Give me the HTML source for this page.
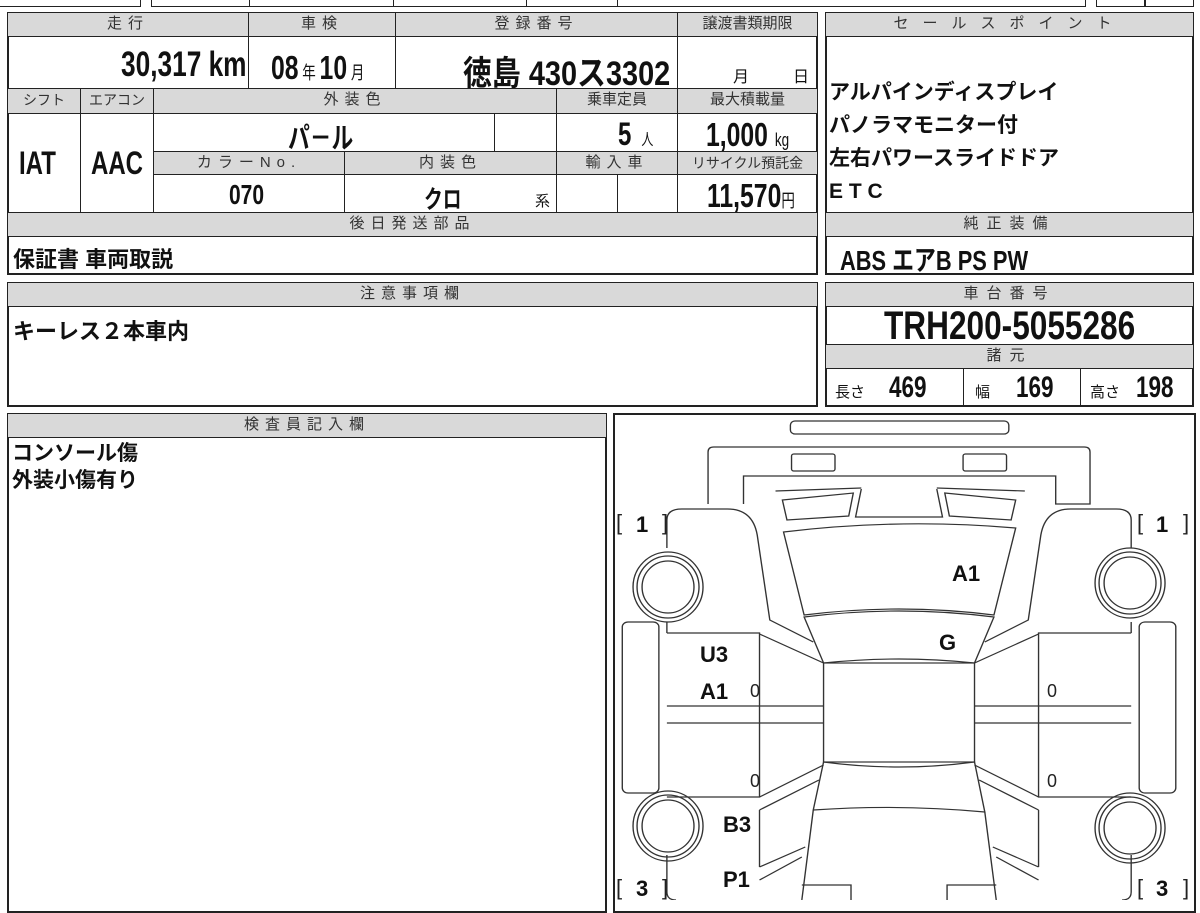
<!DOCTYPE html>
<html><head><meta charset="utf-8"><style>
body{margin:0;width:1200px;height:900px;overflow:hidden;background:#fff;position:relative;font-family:"Liberation Sans","Noto Sans CJK JP",sans-serif}
.b{position:absolute;border:1px solid #222;box-sizing:border-box}
.h{position:absolute;background:#d9d9d9;border:1px solid #222;box-sizing:border-box;font-size:15px;color:#333;text-align:center;letter-spacing:6px;line-height:22px;white-space:nowrap;overflow:hidden}
.v{position:absolute;box-sizing:border-box;font-weight:bold;color:#111;white-space:nowrap;transform:scaleX(0.75);transform-origin:0 0}
.v span{font-weight:normal}
.t{position:absolute;font-weight:bold;color:#111;white-space:nowrap}
.o{position:absolute;border:2px solid #222;box-sizing:border-box}
</style></head><body>
<div class="b" style="left:-2px;top:-10px;width:143px;height:17px"></div>
<div class="b" style="left:151px;top:-10px;width:935px;height:17px"></div>
<div class="b" style="left:249px;top:-10px;width:145px;height:17px"></div>
<div class="b" style="left:526px;top:-10px;width:92px;height:17px"></div>
<div class="b" style="left:1096px;top:-10px;width:98px;height:17px"></div>
<div class="b" style="left:1144px;top:-10px;width:1px;height:17px"></div>

<div class="o" style="left:7px;top:12px;width:811px;height:263px"></div>
<div class="h" style="left:7px;top:12px;width:242px;height:25px">走行</div>
<div class="h" style="left:248px;top:12px;width:148px;height:25px">車検</div>
<div class="h" style="left:395px;top:12px;width:283px;height:25px">登録番号</div>
<div class="h" style="left:677px;top:12px;width:141px;height:25px;letter-spacing:0">譲渡書類期限</div>
<div class="b" style="left:7px;top:36px;width:242px;height:53px"></div>
<div class="b" style="left:248px;top:36px;width:148px;height:53px"></div>
<div class="b" style="left:395px;top:36px;width:283px;height:53px"></div>
<div class="b" style="left:677px;top:36px;width:141px;height:53px"></div>
<div class="v" style="left:121px;top:45px;font-size:35px">30,317 km</div>
<div class="v" style="left:271px;top:49px;font-size:33px">08<span style="font-size:18px"> 年 </span>10<span style="font-size:18px"> 月</span></div>
<div class="v" style="left:463px;top:46px;font-size:34px;transform:scaleX(0.85)">徳島 430ス3302</div>
<div class="t" style="left:733px;top:63px;font-size:16px;font-weight:normal">月</div>
<div class="t" style="left:793px;top:63px;font-size:16px;font-weight:normal">日</div>

<div class="h" style="left:7px;top:88px;width:74px;height:26px;letter-spacing:0;font-size:14px">シフト</div>
<div class="h" style="left:80px;top:88px;width:74px;height:26px;letter-spacing:0;font-size:14px">エアコン</div>
<div class="h" style="left:153px;top:88px;width:404px;height:26px">外装色</div>
<div class="h" style="left:556px;top:88px;width:122px;height:26px;letter-spacing:0">乗車定員</div>
<div class="h" style="left:677px;top:88px;width:141px;height:26px;letter-spacing:0">最大積載量</div>
<div class="b" style="left:7px;top:113px;width:74px;height:100px"></div>
<div class="b" style="left:80px;top:113px;width:74px;height:100px"></div>
<div class="v" style="left:19px;top:145px;font-size:32px">IAT</div>
<div class="v" style="left:91px;top:145px;font-size:32px">AAC</div>
<div class="b" style="left:153px;top:113px;width:342px;height:39px"></div>
<div class="b" style="left:494px;top:113px;width:63px;height:39px"></div>
<div class="b" style="left:556px;top:113px;width:122px;height:39px"></div>
<div class="b" style="left:677px;top:113px;width:141px;height:39px"></div>
<div class="v" style="left:288px;top:115px;font-size:29px">パ－ル</div>
<div class="v" style="left:618px;top:116px;font-size:32px">5 <span style="font-size:16px">&nbsp;人</span></div>
<div class="v" style="left:706px;top:116px;font-size:33px">1,000 <span style="font-size:18px">kg</span></div>
<div class="h" style="left:153px;top:151px;width:192px;height:24px">カラーNo.</div>
<div class="h" style="left:344px;top:151px;width:213px;height:24px">内装色</div>
<div class="h" style="left:556px;top:151px;width:122px;height:24px">輸入車</div>
<div class="h" style="left:677px;top:151px;width:141px;height:24px;letter-spacing:0;font-size:14px">リサイクル預託金</div>
<div class="b" style="left:153px;top:174px;width:192px;height:39px"></div>
<div class="b" style="left:344px;top:174px;width:213px;height:39px"></div>
<div class="b" style="left:556px;top:174px;width:62px;height:39px"></div>
<div class="b" style="left:617px;top:174px;width:61px;height:39px"></div>
<div class="b" style="left:677px;top:174px;width:141px;height:39px"></div>
<div class="v" style="left:229px;top:179px;font-size:28px">070</div>
<div class="v" style="left:424px;top:180px;font-size:25px">クロ</div>
<div class="t" style="left:535px;top:190px;font-size:15px;font-weight:normal">系</div>
<div class="v" style="left:707px;top:177px;font-size:33px">11,570<span style="font-size:18px">円</span></div>
<div class="h" style="left:7px;top:212px;width:811px;height:25px">後日発送部品</div>
<div class="t" style="left:13px;top:242px;font-size:22px">保証書 車両取説</div>

<div class="o" style="left:825px;top:12px;width:369px;height:263px"></div>
<div class="h" style="left:825px;top:12px;width:369px;height:25px;letter-spacing:14px">セールスポイント</div>
<div class="t" style="left:829px;top:76px;font-size:21px;line-height:33px">アルパインディスプレイ<br>パノラマモニター付<br>左右パワースライドドア<br>E T C</div>
<div class="h" style="left:825px;top:212px;width:369px;height:25px;letter-spacing:8px">純正装備</div>
<div class="v" style="left:840px;top:239px;font-size:28px;transform:scaleX(0.78)">ABS エアB PS PW</div>

<div class="o" style="left:7px;top:282px;width:811px;height:125px"></div>
<div class="h" style="left:7px;top:282px;width:811px;height:25px">注意事項欄</div>
<div class="t" style="left:13px;top:314px;font-size:22px">キーレス２本車内</div>

<div class="o" style="left:825px;top:282px;width:369px;height:125px"></div>
<div class="h" style="left:825px;top:282px;width:369px;height:25px;letter-spacing:8px">車台番号</div>
<div class="v" style="left:884px;top:304px;font-size:40px;transform:scaleX(0.79)">TRH200-5055286</div>
<div class="h" style="left:825px;top:344px;width:369px;height:25px;letter-spacing:8px">諸元</div>
<div class="b" style="left:825px;top:368px;width:139px;height:39px"></div>
<div class="b" style="left:963px;top:368px;width:118px;height:39px"></div>
<div class="t" style="left:835px;top:381px;font-size:15px;font-weight:normal">長さ</div>
<div class="v" style="left:889px;top:371px;font-size:30px">469</div>
<div class="t" style="left:975px;top:381px;font-size:15px;font-weight:normal">幅</div>
<div class="v" style="left:1016px;top:371px;font-size:30px">169</div>
<div class="t" style="left:1090px;top:381px;font-size:15px;font-weight:normal">高さ</div>
<div class="v" style="left:1136px;top:371px;font-size:30px">198</div>

<div class="o" style="left:7px;top:413px;width:600px;height:500px"></div>
<div class="h" style="left:7px;top:413px;width:600px;height:25px">検査員記入欄</div>
<div class="t" style="left:12px;top:440px;font-size:21px;line-height:27px">コンソール傷<br>外装小傷有り</div>

<div class="o" style="left:613px;top:413px;width:583px;height:500px"></div>
<svg style="position:absolute;left:610px;top:410px" width="590" height="490" viewBox="0 0 590 490">
<g fill="none" stroke="#333" stroke-width="1.2" transform="translate(-8.3,0) scale(1.1436,1)">
<rect x="165" y="11" width="191" height="13" rx="4"/>
<path d="M93,94 L93,42 Q93,37 98,37 L422,37 Q427,37 427,42 L427,94 L397,94 L397,66 L124,66 L124,94"/>
<rect x="166" y="44" width="38" height="17" rx="2"/>
<rect x="316" y="44" width="38" height="17" rx="2"/>
<path d="M152,81 L227,78 M293,78 L370,81"/>
<path d="M158,90 L220,83 L216,106 L162,110 Z"/>
<path d="M300,83 L362,90 L358,110 L304,106 Z"/>
<path d="M227,79 L222,107 L298,107 L293,79"/>
<path d="M159,122 Q260,108 362,118 L343,205 Q260,193 177,205 Z"/>
<path d="M177,207 Q260,195 343,207 L326,253 Q260,245 194,253 Z"/>
<rect x="194" y="253" width="132" height="99"/>
<path d="M194,352 Q260,362 326,352 L335,402 Q260,394 185,400 Z"/>
<path d="M185,400 L175,490 M335,402 L345,490"/>
<path d="M57,138 L57,110 Q57,99 70,99 L110,99 Q132,99 136,125 L147,210 L185,232"/>
<path d="M138,224 L194,253"/>
<path d="M463,138 L463,110 Q463,99 450,99 L410,99 Q388,99 384,125 L373,210 L335,232"/>
<path d="M382,224 L326,253"/>
<path d="M57,223 L138,223 L138,387 L57,387 M57,296 L194,296 M57,313 L194,313"/>
<path d="M463,223 L382,223 L382,387 L463,387 M463,296 L326,296 M463,313 L326,313"/>
<path d="M57,223 L57,212 M463,223 L463,212"/>
<path d="M138,387 L194,355 M382,387 L326,355"/>
<path d="M138,400 L190,370 M138,457 L178,437 M138,400 L138,457 M138,470 L175,447"/>
<path d="M382,400 L330,370 M382,457 L342,437 M382,400 L382,457 M382,470 L345,447"/>
<path d="M57,445 L57,482 Q57,490 65,490 M463,445 L463,482 Q463,490 455,490"/>
<path d="M175,475 L218,475 L218,490 M302,490 L302,475 L345,475"/>
<rect x="18" y="212" width="32" height="171" rx="5"/>
<rect x="470" y="212" width="32" height="171" rx="5"/>
<ellipse cx="58" cy="177" rx="30.6" ry="35"/><ellipse cx="58" cy="177" rx="27.1" ry="31"/><ellipse cx="58" cy="177" rx="22.7" ry="26"/>
<ellipse cx="462" cy="173" rx="30.6" ry="35"/><ellipse cx="462" cy="173" rx="27.1" ry="31"/><ellipse cx="462" cy="173" rx="22.7" ry="26"/>
<ellipse cx="58" cy="416" rx="30.6" ry="35"/><ellipse cx="58" cy="416" rx="27.1" ry="31"/><ellipse cx="58" cy="416" rx="22.7" ry="26"/>
<ellipse cx="462" cy="418" rx="30.6" ry="35"/><ellipse cx="462" cy="418" rx="27.1" ry="31"/><ellipse cx="462" cy="418" rx="22.7" ry="26"/>
</g>
<g fill="#111" font-family="Liberation Sans, sans-serif" font-weight="bold" font-size="22">
<text x="342" y="171">A1</text><text x="329" y="240">G</text>
<text x="90" y="252">U3</text><text x="90" y="289">A1</text>
<text x="113" y="422">B3</text><text x="113" y="477">P1</text>
<text x="26" y="122">1</text><text x="546" y="122">1</text>
<text x="26" y="486">3</text><text x="546" y="486">3</text>
</g>
<g fill="#222" font-family="Liberation Sans, sans-serif" font-size="18">
<text x="140" y="287">0</text><text x="437" y="287">0</text><text x="140" y="377">0</text><text x="437" y="377">0</text>
</g>
<g fill="#222" font-family="Liberation Sans, sans-serif" font-size="22">
<text x="6" y="120">[</text><text x="52" y="120">]</text><text x="527" y="120">[</text><text x="573" y="120">]</text>
<text x="6" y="485">[</text><text x="52" y="485">]</text><text x="527" y="485">[</text><text x="573" y="485">]</text>
</g>
</svg>
</body></html>
